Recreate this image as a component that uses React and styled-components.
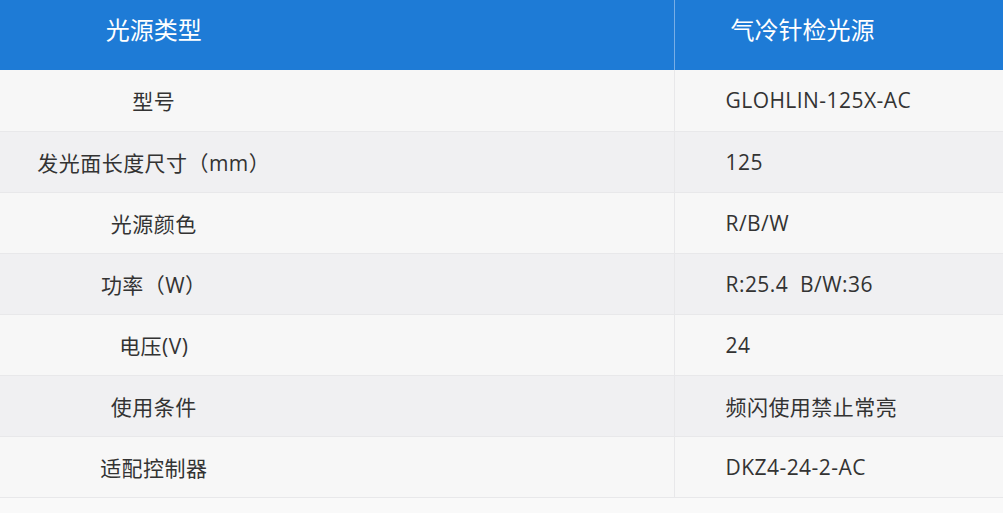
import React from 'react';
import styled, { createGlobalStyle } from 'styled-components';

const GlobalStyle = createGlobalStyle`
  html, body { margin: 0; padding: 0; background: #f9f9f9; }
  body { font-family: "Open Sans", "Noto Sans CJK SC", sans-serif; }
`;

const Table = styled.table`
  width: 1003px;
  border-collapse: collapse;
  table-layout: fixed;
  color: #333;
`;

const HeadCell = styled.th`
  height: 70px;
  padding: 0 0 14px;
  background: #1e7bd6;
  color: #fff;
  font-size: 24px;
  font-weight: 400;
  text-align: ${p => (p.$right ? 'left' : 'center')};
  padding-left: ${p => (p.$right ? '56px' : '0')};
  padding-right: ${p => (p.$right ? '0' : '366px')};
  border-left: ${p => (p.$right ? '1px solid #78aee6' : 'none')};
  box-sizing: border-box;
`;

const Row = styled.tr`
  background: ${p => (p.$odd ? '#f7f7f7' : '#f0f0f2')};
  border-bottom: 1px solid #e8e8ea;
`;

const Cell = styled.td`
  height: 61px;
  padding: 0;
  font-size: 21px;
  letter-spacing: 0.45px;
  text-align: ${p => (p.$right ? 'left' : 'center')};
  padding-left: ${p => (p.$right ? '51px' : '0')};
  padding-right: ${p => (p.$right ? '0' : '366px')};
  border-left: ${p => (p.$right ? '1px solid #e8e8ea' : 'none')};
  white-space: pre;
  box-sizing: border-box;
`;

const rows = [
  ['型号', 'GLOHLIN-125X-AC'],
  ['发光面长度尺寸（mm）', '125'],
  ['光源颜色', 'R/B/W'],
  ['功率（W）', 'R:25.4  B/W:36'],
  ['电压(V)', '24'],
  ['使用条件', '频闪使用禁止常亮'],
  ['适配控制器', 'DKZ4-24-2-AC'],
];

export default function App() {
  return (
    <>
      <GlobalStyle />
      <Table>
        <colgroup>
          <col style={{ width: 674 }} />
          <col />
        </colgroup>
        <thead>
          <tr>
            <HeadCell>光源类型</HeadCell>
            <HeadCell $right>气冷针检光源</HeadCell>
          </tr>
        </thead>
        <tbody>
          {rows.map(([k, v], i) => (
            <Row key={k} $odd={i % 2 === 0}>
              <Cell>{k}</Cell>
              <Cell $right>{v}</Cell>
            </Row>
          ))}
        </tbody>
      </Table>
    </>
  );
}
